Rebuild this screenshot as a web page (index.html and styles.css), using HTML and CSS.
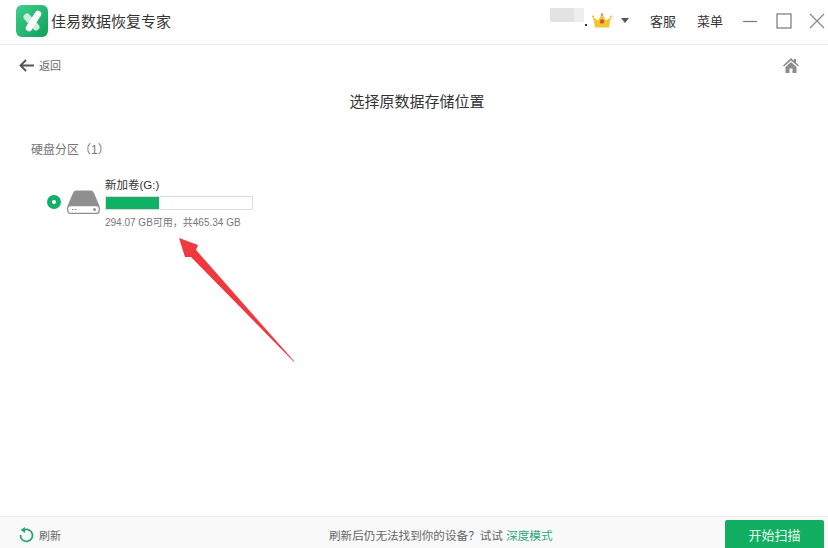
FILE: index.html
```html
<!DOCTYPE html>
<html lang="zh-CN">
<head>
    <meta charset="UTF-8">
    <title>佳易数据恢复专家</title>
    <link rel="stylesheet" href="styles.css">
</head>
<body>
    <div class="app">
        <header class="titlebar">
            <div class="brand">
                <svg class="logo" width="32" height="32" viewBox="0 0 32 32">
                    <defs>
                        <linearGradient id="logoBg" x1="0" y1="0" x2="1" y2="1">
                            <stop offset="0" stop-color="#3fcf8e"/>
                            <stop offset="1" stop-color="#0fa05c"/>
                        </linearGradient>
                    </defs>
                    <rect width="32" height="32" rx="6" fill="url(#logoBg)"/>
                    <path d="M11 12L20 22" stroke="#c9f0dc" stroke-width="7" stroke-linecap="round"/>
                    <path d="M22 9L13 23" stroke="#ffffff" stroke-width="6.500" stroke-linecap="round"/>
                </svg>
                <span class="app-name">佳易数据恢复专家</span>
            </div>
            <div class="top-actions">
                <div class="user">
                    <span class="user-blur"></span>
                    <span class="user-dot"></span>
                    <svg width="20" height="15" viewBox="0 0 20 15">
                        <path d="M3 14.500L1 4L6 7.500L10 1L14 7.500L19 4L17 14.500Z" fill="#f3c433"/>
                        <circle cx="10" cy="8.500" r="2.200" fill="#d9562c"/>
                        <circle cx="10" cy="1.500" r="1.200" fill="#f08a3c"/>
                        <circle cx="1" cy="3.500" r="1" fill="#f3b23c"/>
                        <circle cx="19" cy="3.500" r="1" fill="#f3b23c"/>
                    </svg>
                    <span class="caret"></span>
                </div>
                <span class="top-link">客服</span>
                <span class="top-link">菜单</span>
                <div class="win-btns">
                    <svg width="16" height="16" viewBox="0 0 16 16"><path d="M1 8.500H15" stroke="#777" stroke-width="1.200"/></svg>
                    <svg width="16" height="16" viewBox="0 0 16 16"><rect x="1" y="1" width="14" height="14" fill="none" stroke="#777" stroke-width="1.200"/></svg>
                    <svg width="16" height="16" viewBox="0 0 16 16"><path d="M1 1L15 15M15 1L1 15" stroke="#888" stroke-width="1.200"/></svg>
                </div>
            </div>
        </header>

        <main class="content">
            <div class="nav-row">
                <div class="back">
                    <svg width="15" height="13" viewBox="0 0 15 13"><path d="M7 1L1.500 6.500L7 12M2 6.500H15" fill="none" stroke="#555" stroke-width="1.800"/></svg>
                    <span>返回</span>
                </div>
                <svg class="home" width="16" height="15" viewBox="0 0 16 15">
                    <path d="M8 0L0 7.500L1 8.500L8 2.500L15 8.500L16 7.500L13 4.700V1H10.800V2.700Z M2.500 9V15H6.500V10.500H9.500V15H13.500V9L8 4Z" fill="#8c8c8c"/>
                </svg>
            </div>
            <h1 class="page-title">选择原数据存储位置</h1>
            <h2 class="section-title">硬盘分区（1）</h2>
            <div class="disk">
                <span class="radio"></span>
                <svg class="disk-icon" width="33" height="24" viewBox="0 0 33 24">
                    <path d="M9 0.500H24Q26 0.500 27 3L32.500 16H0.500L6 3Q7 0.500 9 0.500Z" fill="#8f8f8f"/>
                    <rect x="0.700" y="15.500" width="31.600" height="8" rx="3" fill="#fff" stroke="#8f8f8f" stroke-width="1.300"/>
                    <circle cx="27.500" cy="19.500" r="1.500" fill="#8f8f8f"/>
                    <path d="M5 19.500H6.500M8 19.500H9.500" stroke="#8f8f8f"/>
                </svg>
                <div class="disk-info">
                    <div class="disk-name">新加卷(G:)</div>
                    <div class="bar"><div class="bar-fill"></div></div>
                    <div class="disk-size">294.07 GB可用，共465.34 GB</div>
                </div>
            </div>
            <svg class="arrow" width="120" height="126" viewBox="0 0 120 126">
                <path d="M0 1L19 8L17 13L115 124L115 125L12 20L6 20Z" fill="#f0393f"/>
            </svg>
        </main>

        <footer class="footer">
            <div class="refresh">
                <svg width="15" height="16" viewBox="0 0 15 16">
                    <path d="M4 3.500A6 6 0 1 1 1.500 8" fill="none" stroke="#27a877" stroke-width="1.800"/>
                    <path d="M6 0L6 6L1.500 3Z" fill="#27a877"/>
                </svg>
                <span>刷新</span>
            </div>
            <div class="hint">刷新后仍无法找到你的设备？试试 <span class="deep-link">深度模式</span></div>
            <button class="scan-btn">开始扫描</button>
        </footer>
    </div>
</body>
</html>
```

FILE: styles.css
```css
* {
    box-sizing: border-box;
}
html, body {
    margin: 0;
    padding: 0;
    background: #fff;
}
body {
    font-family: "Liberation Sans", "Noto Sans CJK SC", sans-serif;
    color: #555;
    overflow: hidden;
}
.app {
    width: 828px;
    height: 548px;
    display: flex;
    flex-direction: column;
}
.titlebar {
    height: 45px;
    flex: none;
    display: flex;
    justify-content: space-between;
    align-items: center;
    padding: 0 3px 3px 16px;
    border-bottom: 1px solid #ebebeb;
}
.brand {
    display: flex;
    align-items: center;
    gap: 3px;
}
.app-name {
    font-size: 15px;
    color: #333;
}
.top-actions {
    display: flex;
    align-items: center;
}
.user {
    display: flex;
    align-items: center;
}
.user-blur {
    width: 34px;
    height: 14px;
    margin-bottom: 12px;
    background: linear-gradient(to right, #e3e3e3 72%, #eeeeee 72%);
}
.user-dot {
    width: 2px;
    height: 2px;
    margin: 8px 5px 0 1px;
    background: #333;
}
.caret {
    margin-left: 9px;
    border-left: 4.500px solid transparent;
    border-right: 4.500px solid transparent;
    border-top: 5px solid #555;
}
.top-link {
    font-size: 13px;
    color: #333;
    margin-left: 21px;
}
.win-btns {
    display: flex;
    gap: 17.500px;
    margin-left: 19px;
}
.content {
    flex: 1;
    position: relative;
    padding: 0 29px 0 19px;
}
.nav-row {
    display: flex;
    justify-content: space-between;
    align-items: center;
    height: 40px;
}
.back {
    display: flex;
    align-items: center;
    gap: 5px;
    font-size: 11px;
    color: #666;
}
.page-title {
    margin: 5px 0 0;
    padding-left: 16px;
    font-size: 15px;
    font-weight: normal;
    text-align: center;
    color: #333;
    line-height: 24px;
}
.section-title {
    margin: 27px 0 0 12px;
    font-size: 12px;
    font-weight: normal;
    color: #777;
    line-height: 18px;
}
.disk {
    display: flex;
    align-items: center;
    margin: 19px 0 0 28px;
}
.radio {
    width: 14px;
    height: 14px;
    border: 5px solid #12ae6c;
    border-radius: 50%;
    margin: 0 6px 4px 0;
}
.disk-icon {
    margin: 0 5px 4px 0;
}
.disk-name {
    font-size: 11.500px;
    color: #333;
    line-height: 14px;
}
.bar {
    width: 148px;
    height: 14px;
    margin-top: 4px;
    border: 1px solid #dcdcdc;
}
.bar-fill {
    width: 53px;
    height: 100%;
    background: #0fb164;
}
.disk-size {
    margin-top: 6px;
    font-size: 10px;
    color: #777;
    line-height: 14px;
}
.arrow {
    position: absolute;
    left: 179px;
    top: 192px;
}
.footer {
    height: 32px;
    flex: none;
    position: relative;
    display: flex;
    align-items: center;
    padding: 5px 0 0 19px;
    background: #f9f9f9;
    border-top: 1px solid #ececec;
}
.refresh {
    display: flex;
    align-items: center;
    gap: 5px;
    font-size: 11px;
    color: #666;
}
.hint {
    margin-left: 268px;
    font-size: 11.600px;
    color: #666;
}
.deep-link {
    color: #2aa87a;
}
.scan-btn {
    position: absolute;
    right: 4px;
    top: 3px;
    width: 99px;
    height: 28px;
    border: none;
    border-radius: 2px 2px 0 0;
    background: #12ae62;
    color: #e8f8ef;
    font-family: inherit;
    font-size: 13px;
    padding: 0;
}
```
